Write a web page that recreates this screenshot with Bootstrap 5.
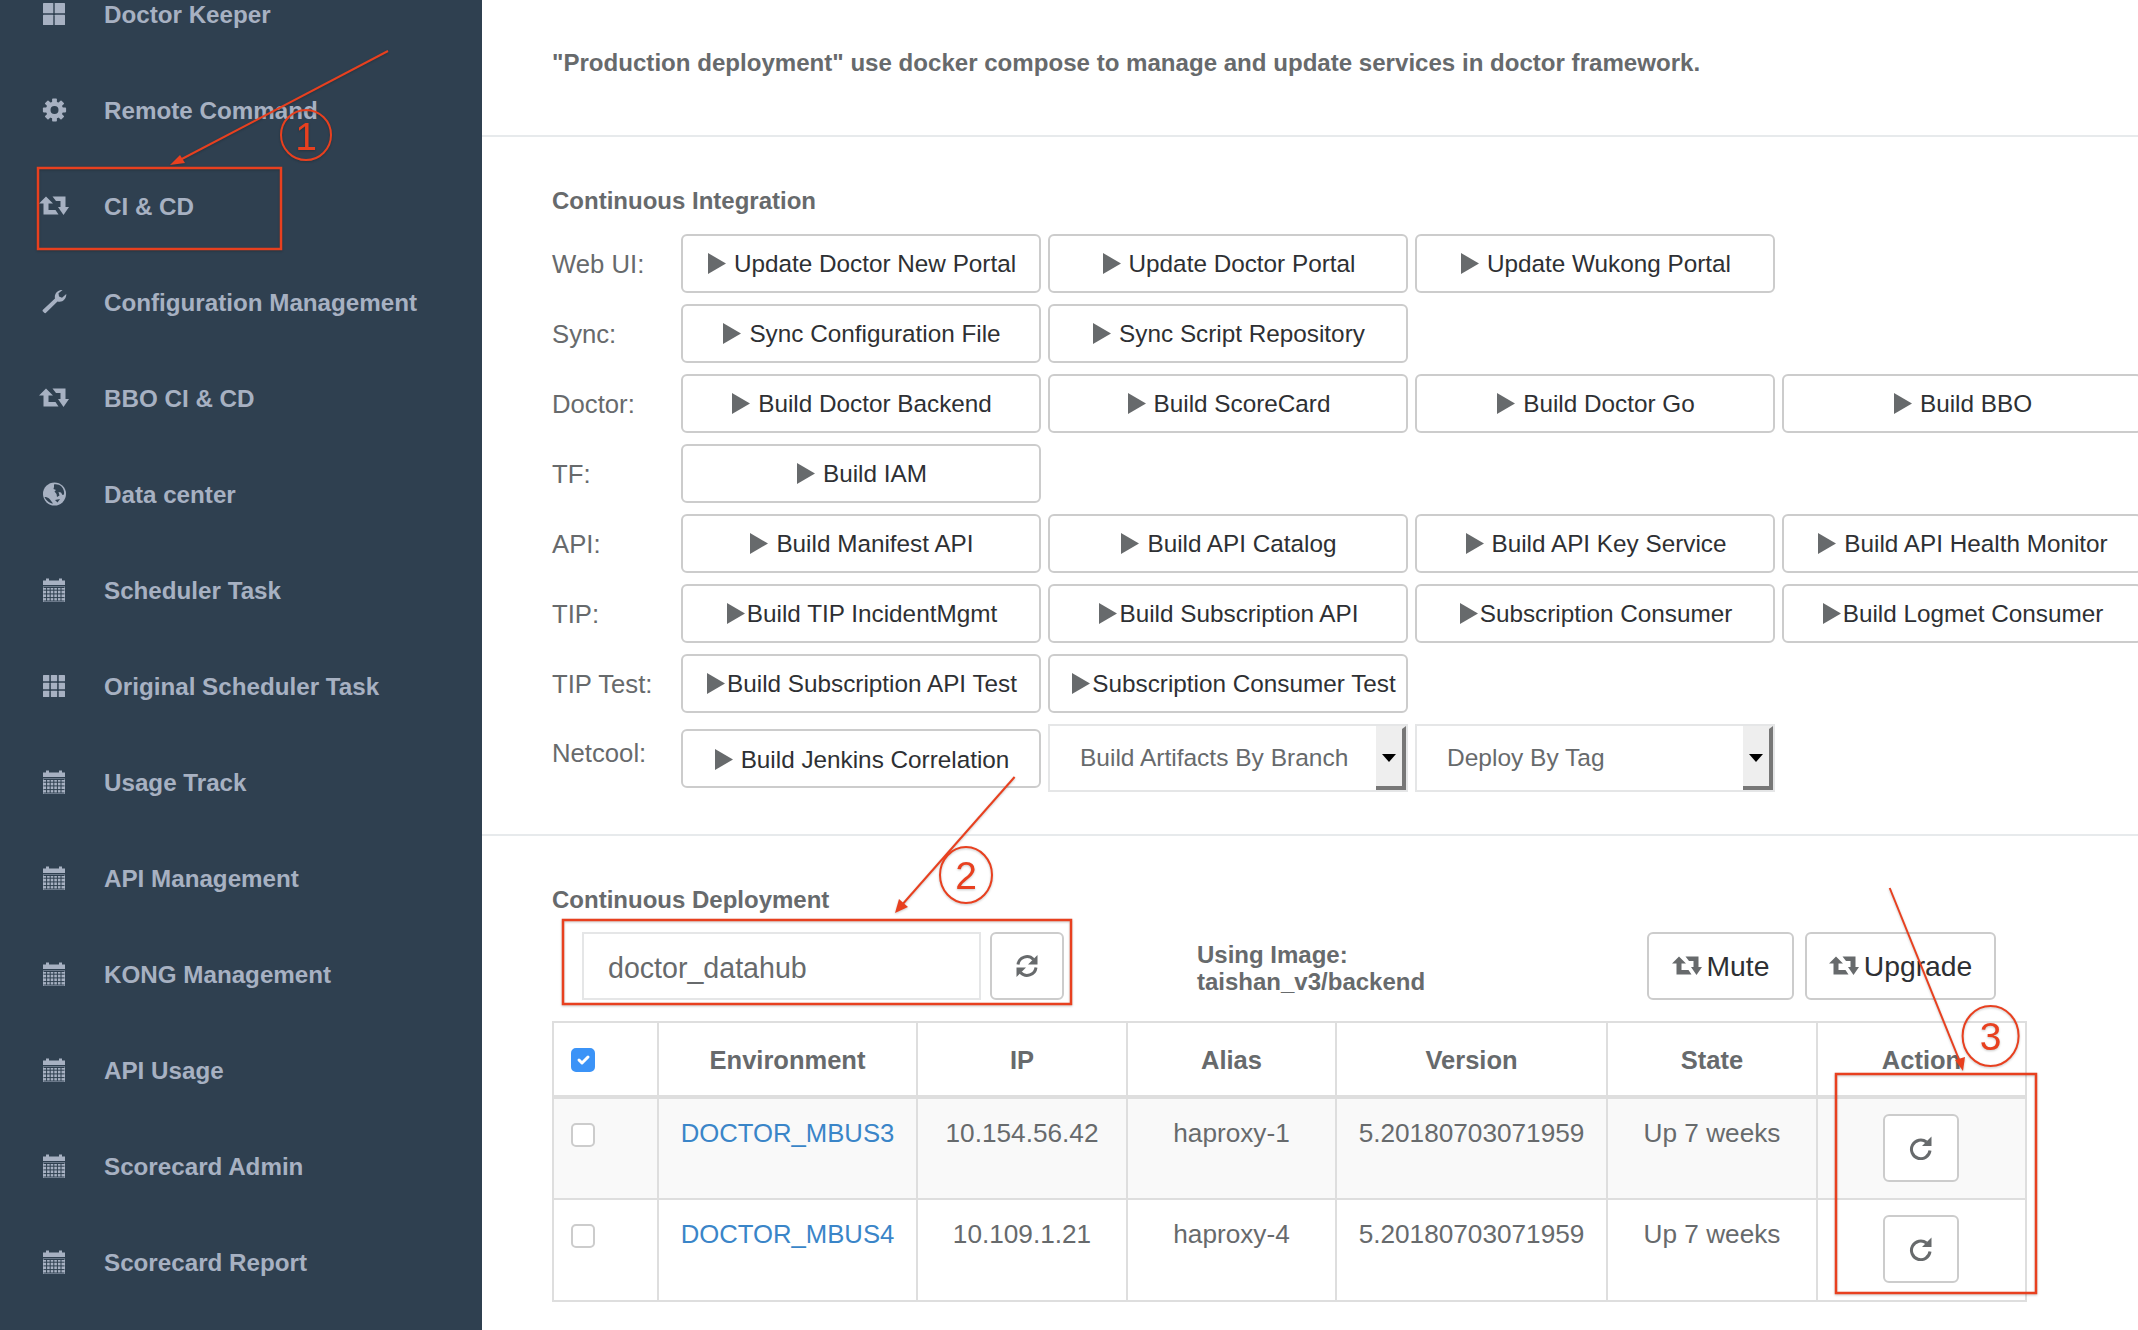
<!DOCTYPE html>
<html lang="en">
<head>
<meta charset="utf-8">
<title>CI &amp; CD</title>
<link rel="stylesheet" href="https://cdn.jsdelivr.net/npm/bootstrap@5.3.0/dist/css/bootstrap.min.css">
<style>
html,body{height:1330px;overflow:hidden}
body{font-family:"Liberation Sans",Arial,sans-serif;color:#676a6c;background:#fff;position:relative}
.side{width:482px;height:1330px;background:#2f4050;overflow:hidden;flex:none}
.side-list{margin-top:-34px}
.side-item{height:96px;padding:2px 0 0 39px;gap:35px;color:#a7b1c2;font-size:24.2px;font-weight:700;text-decoration:none}
.side-item:hover{color:#a7b1c2}
.side-ico{width:30px;height:24px;flex:none;fill:currentColor;margin-top:-2px}
.main{flex:1 1 0;min-width:0;overflow:hidden}
.intro{height:137px;padding:47px 0 0 70px;border-bottom:2px solid #e7eaec;font-size:24.08px;line-height:32px;font-weight:700}
.sec-title{font-size:24px;line-height:32px;font-weight:700;margin:0}
.ci{padding:48px 0 42px 70px;border-bottom:2px solid #e7eaec}
.ci .sec-title{margin-bottom:17px}
.ci-row{margin-bottom:11px}
.ci-row:last-child{margin-bottom:0}
.ci-label{width:129px;flex:none;font-size:25.7px;line-height:32px}
.ci-btns{gap:7px}
.act{width:360px;height:59px;flex:none;padding:2px 0 0 2px;background:#fff;border:2px solid #ccc;border-radius:6px;color:#2e3033;font-size:24.3px;line-height:1;gap:8px}
.act.tight{gap:2px}
.act.nudge{padding-left:12px}
.act:hover{background:#fff;border-color:#ccc;color:#2e3033}
.tri{width:18px;height:21px;flex:none;fill:#676a6c;margin-top:-2px}
.lbl-top{align-self:flex-start;line-height:58px}
.act-low{margin-top:5px;padding-top:4px}
.pick{width:360px;height:68px;flex:none;border:2px solid #e5e6e7;font-size:24.5px}
.pick-txt{padding-left:30px}
.pick-caret{width:30px;border-style:solid;border-width:3px 4px 4px 0;border-color:#eee #777 #777 #eee;background:#eee}
.pick-caret i{width:0;height:0;border-left:7px solid transparent;border-right:7px solid transparent;border-top:8px solid #000}
.cd{padding:48px 0 0 70px}
.cd .sec-title{margin-bottom:16px}
.tools{height:68px;margin-bottom:21px;gap:9px}
.name-input.form-control{width:399px;height:68px;margin-left:30px;border:2px solid #e5e6e7;border-radius:0;padding:5px 24px 0;font-size:28.6px;color:#676a6c;background:#fff}
.tbtn{height:68px;background:#fff;border:2px solid #ccc;border-radius:6px;color:#2e3033;font-size:28.3px;padding:0;line-height:1}
.tbtn:hover{background:#fff;border-color:#ccc;color:#2e3033}
.tbtn-ico{width:74px}
.tbtn-mute{width:147px}
.tbtn-up{width:191px}
.ico-ref{width:24px;height:24px;fill:none;stroke:#676a6c;stroke-width:3}
.ico-ref .head{fill:#676a6c;stroke:none}
.ico-ret{width:30px;height:24px;flex:none;fill:#676a6c;margin-right:5px}
.using{margin-left:124px;width:441px;font-size:24px;line-height:27px;font-weight:700;padding-top:4px}
.up-group{gap:11px}
.env-table.table{width:1473px;table-layout:fixed;margin:0;--bs-table-striped-bg:#f9f9f9;--bs-table-border-color:#dedede;--bs-table-color:#676a6c;--bs-table-striped-color:#676a6c;font-size:26.2px;text-align:center;color:#676a6c}
.env-table th,.env-table td{border-width:2px;padding:0}
.env-table thead th{height:75px;vertical-align:middle;border-bottom-width:4px;font-weight:700;font-size:25.5px;padding-top:2px}
.env-table tbody td{height:102px;vertical-align:top;padding-top:15px}
.env-table a{color:#3a85c8;text-decoration:none;font-size:25.7px}
.chk.form-check-input{width:24px;height:24px;margin:0;border:2px solid #ccc;border-radius:5px;background-color:#fff;display:block;margin-left:17px}
.chk.form-check-input:checked{background-color:#3b93f7;border-color:#3b93f7}
td .chk.form-check-input{margin-top:9px}
.env-table td.act-cell{padding-top:15px}
.rowbtn{width:76px;height:68px;background:#fff;border:2px solid #ccc;border-radius:6px;padding:0;margin-left:-2px}
.rowbtn:hover{background:#fff;border-color:#ccc}
.marks{position:absolute;left:0;top:0;width:2138px;height:1330px;pointer-events:none;z-index:5;filter:drop-shadow(0 1px 1px rgba(0,0,0,.22))}
.marks text{font-family:"Liberation Sans",Arial,sans-serif;font-size:39px;fill:#e8401f;text-anchor:middle}
.marks .ln{stroke:#e8401f;stroke-width:2;fill:none}
.marks .bx{stroke:#e8401f;stroke-width:2.5;fill:none}
.marks .hd{fill:#e8401f}
</style>
</head>
<body>
<svg width="0" height="0" class="d-block" style="position:absolute" aria-hidden="true">
  <symbol id="i-thl" viewBox="0 0 30 24"><rect x="4" y="1" width="10.3" height="10.3" rx=".6"/><rect x="15.7" y="1" width="10.3" height="10.3" rx=".6"/><rect x="4" y="12.7" width="10.3" height="10.3" rx=".6"/><rect x="15.7" y="12.7" width="10.3" height="10.3" rx=".6"/></symbol>
  <symbol id="i-cog" viewBox="0 0 30 24"><g transform="translate(15.5 12)"><path fill-rule="evenodd" d="M-8.6 0A8.6 8.6 0 1 0 8.6 0A8.6 8.6 0 1 0-8.6 0ZM-4 0A4 4 0 1 1 4 0A4 4 0 1 1-4 0Z"/><g><rect x="-2.4" y="-11.6" width="4.8" height="5" rx=".8"/><rect x="-2.4" y="6.6" width="4.8" height="5" rx=".8"/><rect x="-11.6" y="-2.4" width="5" height="4.8" rx=".8"/><rect x="6.6" y="-2.4" width="5" height="4.8" rx=".8"/></g><g transform="rotate(45)"><rect x="-2.4" y="-11.6" width="4.8" height="5" rx=".8"/><rect x="-2.4" y="6.6" width="4.8" height="5" rx=".8"/><rect x="-11.6" y="-2.4" width="5" height="4.8" rx=".8"/><rect x="6.6" y="-2.4" width="5" height="4.8" rx=".8"/></g></g></symbol>
  <symbol id="i-ret" viewBox="0 0 30 24"><path d="M7 2.500 14 9.500H9.500V16H16.500L19.500 20.500H4.500V9.500H0Z"/><path d="M13.500 2.500H26.500V13H30L24.500 21 19 13H21.500V7H17Z"/></symbol>
  <symbol id="i-wr" viewBox="0 0 30 24"><path d="M5.500 23 3.500 21 3.700 20 16 8.500C15 4 18.500-.2 24-.3L19.500 3.200 20 6.600 23 7.800 27.300 4C27.500 9.500 23 13 18.500 11.400L6.500 23.200Z"/></symbol>
  <symbol id="i-gl" viewBox="0 0 30 24"><circle cx="15.500" cy="12" r="11.500"/><path fill="#2f4050" d="M15 2.500C17 1.800 20.500 2.500 22.500 4.500 24.500 6.500 25.500 9.500 25 12.500L23.500 13 22 10.500 19.500 10 20.500 13.500 18 15 17.500 12 15.500 9.500 17 8 14.500 7 15 5Z"/><path fill="#2f4050" d="M5.500 15C7 15 9.500 15.500 11 17.500L14 21.500C11 21.500 7.500 19 5.500 15Z"/><path fill="#2f4050" d="M16 18 21 17 18.500 20.500Z"/></symbol>
  <symbol id="i-cal" viewBox="0 0 30 24"><path d="M4 2.500H7V.5H10V2.500H20V.5H23V2.500H26V7H4Z"/><path d="M4 8.500H26V24H4Z"/><path fill="none" stroke="#2f4050" stroke-width="1" d="M4.500 12.200H25.500M4.500 15.900H25.500M4.500 19.600H25.500M7.600 9.500V23M11.200 9.500V23M14.800 9.500V23M18.400 9.500V23M22 9.500V23M4.500 9.500H25.500M4.500 23H25.500"/></symbol>
  <symbol id="i-th" viewBox="0 0 30 24"><rect x="4" y="1" width="6.300" height="6.300" rx=".5"/><rect x="11.850" y="1" width="6.300" height="6.300" rx=".5"/><rect x="19.700" y="1" width="6.300" height="6.300" rx=".5"/><rect x="4" y="8.850" width="6.300" height="6.300" rx=".5"/><rect x="11.850" y="8.850" width="6.300" height="6.300" rx=".5"/><rect x="19.700" y="8.850" width="6.300" height="6.300" rx=".5"/><rect x="4" y="16.700" width="6.300" height="6.300" rx=".5"/><rect x="11.850" y="16.700" width="6.300" height="6.300" rx=".5"/><rect x="19.700" y="16.700" width="6.300" height="6.300" rx=".5"/></symbol>
  <symbol id="i-tri" viewBox="0 0 18 21"><path d="M0 0 18 10.500 0 21Z"/></symbol>
</svg>

<div class="d-flex">
  <aside class="side">
    <nav class="side-list nav flex-column flex-nowrap">
      <a class="side-item d-flex align-items-center" href="#"><svg class="side-ico"><use href="#i-thl"/></svg>Doctor Keeper</a>
      <a class="side-item d-flex align-items-center" href="#"><svg class="side-ico"><use href="#i-cog"/></svg>Remote Command</a>
      <a class="side-item d-flex align-items-center" href="#"><svg class="side-ico"><use href="#i-ret"/></svg>CI &amp; CD</a>
      <a class="side-item d-flex align-items-center" href="#"><svg class="side-ico"><use href="#i-wr"/></svg>Configuration Management</a>
      <a class="side-item d-flex align-items-center" href="#"><svg class="side-ico"><use href="#i-ret"/></svg>BBO CI &amp; CD</a>
      <a class="side-item d-flex align-items-center" href="#"><svg class="side-ico"><use href="#i-gl"/></svg>Data center</a>
      <a class="side-item d-flex align-items-center" href="#"><svg class="side-ico"><use href="#i-cal"/></svg>Scheduler Task</a>
      <a class="side-item d-flex align-items-center" href="#"><svg class="side-ico"><use href="#i-th"/></svg>Original Scheduler Task</a>
      <a class="side-item d-flex align-items-center" href="#"><svg class="side-ico"><use href="#i-cal"/></svg>Usage Track</a>
      <a class="side-item d-flex align-items-center" href="#"><svg class="side-ico"><use href="#i-cal"/></svg>API Management</a>
      <a class="side-item d-flex align-items-center" href="#"><svg class="side-ico"><use href="#i-cal"/></svg>KONG Management</a>
      <a class="side-item d-flex align-items-center" href="#"><svg class="side-ico"><use href="#i-cal"/></svg>API Usage</a>
      <a class="side-item d-flex align-items-center" href="#"><svg class="side-ico"><use href="#i-cal"/></svg>Scorecard Admin</a>
      <a class="side-item d-flex align-items-center" href="#"><svg class="side-ico"><use href="#i-cal"/></svg>Scorecard Report</a>
    </nav>
  </aside>

  <main class="main">
    <div class="intro">"Production deployment" use docker compose to manage and update services in doctor framework.</div>

    <section class="ci">
      <h5 class="sec-title">Continuous Integration</h5>

      <div class="ci-row d-flex align-items-center">
        <div class="ci-label">Web UI:</div>
        <div class="ci-btns d-flex">
          <button class="btn act d-flex align-items-center justify-content-center"><svg class="tri"><use href="#i-tri"/></svg>Update Doctor New Portal</button>
          <button class="btn act d-flex align-items-center justify-content-center"><svg class="tri"><use href="#i-tri"/></svg>Update Doctor Portal</button>
          <button class="btn act d-flex align-items-center justify-content-center"><svg class="tri"><use href="#i-tri"/></svg>Update Wukong Portal</button>
        </div>
      </div>
      <div class="ci-row d-flex align-items-center">
        <div class="ci-label">Sync:</div>
        <div class="ci-btns d-flex">
          <button class="btn act d-flex align-items-center justify-content-center"><svg class="tri"><use href="#i-tri"/></svg>Sync Configuration File</button>
          <button class="btn act d-flex align-items-center justify-content-center"><svg class="tri"><use href="#i-tri"/></svg>Sync Script Repository</button>
        </div>
      </div>
      <div class="ci-row d-flex align-items-center">
        <div class="ci-label">Doctor:</div>
        <div class="ci-btns d-flex">
          <button class="btn act d-flex align-items-center justify-content-center"><svg class="tri"><use href="#i-tri"/></svg>Build Doctor Backend</button>
          <button class="btn act d-flex align-items-center justify-content-center"><svg class="tri"><use href="#i-tri"/></svg>Build ScoreCard</button>
          <button class="btn act d-flex align-items-center justify-content-center"><svg class="tri"><use href="#i-tri"/></svg>Build Doctor Go</button>
          <button class="btn act d-flex align-items-center justify-content-center"><svg class="tri"><use href="#i-tri"/></svg>Build BBO</button>
        </div>
      </div>
      <div class="ci-row d-flex align-items-center">
        <div class="ci-label">TF:</div>
        <div class="ci-btns d-flex">
          <button class="btn act d-flex align-items-center justify-content-center"><svg class="tri"><use href="#i-tri"/></svg>Build IAM</button>
        </div>
      </div>
      <div class="ci-row d-flex align-items-center">
        <div class="ci-label">API:</div>
        <div class="ci-btns d-flex">
          <button class="btn act d-flex align-items-center justify-content-center"><svg class="tri"><use href="#i-tri"/></svg>Build Manifest API</button>
          <button class="btn act d-flex align-items-center justify-content-center"><svg class="tri"><use href="#i-tri"/></svg>Build API Catalog</button>
          <button class="btn act d-flex align-items-center justify-content-center"><svg class="tri"><use href="#i-tri"/></svg>Build API Key Service</button>
          <button class="btn act d-flex align-items-center justify-content-center"><svg class="tri"><use href="#i-tri"/></svg>Build API Health Monitor</button>
        </div>
      </div>
      <div class="ci-row d-flex align-items-center">
        <div class="ci-label">TIP:</div>
        <div class="ci-btns d-flex">
          <button class="btn act tight d-flex align-items-center justify-content-center"><svg class="tri"><use href="#i-tri"/></svg>Build TIP IncidentMgmt</button>
          <button class="btn act tight d-flex align-items-center justify-content-center"><svg class="tri"><use href="#i-tri"/></svg>Build Subscription API</button>
          <button class="btn act tight d-flex align-items-center justify-content-center"><svg class="tri"><use href="#i-tri"/></svg>Subscription Consumer</button>
          <button class="btn act tight d-flex align-items-center justify-content-center"><svg class="tri"><use href="#i-tri"/></svg>Build Logmet Consumer</button>
        </div>
      </div>
      <div class="ci-row d-flex align-items-center">
        <div class="ci-label">TIP Test:</div>
        <div class="ci-btns d-flex">
          <button class="btn act tight d-flex align-items-center justify-content-center"><svg class="tri"><use href="#i-tri"/></svg>Build Subscription API Test</button>
          <button class="btn act tight nudge d-flex align-items-center justify-content-center"><svg class="tri"><use href="#i-tri"/></svg>Subscription Consumer Test</button>
        </div>
      </div>
      <div class="ci-row d-flex">
        <div class="ci-label lbl-top">Netcool:</div>
        <div class="ci-btns d-flex align-items-start">
          <button class="btn act act-low d-flex align-items-center justify-content-center"><svg class="tri"><use href="#i-tri"/></svg>Build Jenkins Correlation</button>
          <div class="pick d-flex"><span class="pick-txt flex-grow-1 d-flex align-items-center">Build Artifacts By Branch</span><span class="pick-caret d-flex align-items-center justify-content-center"><i></i></span></div>
          <div class="pick d-flex"><span class="pick-txt flex-grow-1 d-flex align-items-center">Deploy By Tag</span><span class="pick-caret d-flex align-items-center justify-content-center"><i></i></span></div>
        </div>
      </div>
    </section>

    <section class="cd">
      <h5 class="sec-title">Continuous Deployment</h5>
      <div class="tools d-flex align-items-center">
        <input class="form-control name-input flex-shrink-0" type="text" value="doctor_datahub" aria-label="Service">
        <button class="btn tbtn tbtn-ico flex-shrink-0 d-flex align-items-center justify-content-center" aria-label="Refresh">
          <svg class="ico-ref" viewBox="0 0 24 24"><path d="M3 10.500A9 9 0 0 1 18.500 5.500"/><path class="head" d="M22.500 1V10.500H13Z"/><path d="M21 13.500A9 9 0 0 1 5.500 18.500"/><path class="head" d="M1.500 23V13.500H11Z"/></svg>
        </button>
        <div class="using flex-shrink-0">Using Image:<br>taishan_v3/backend</div>
        <div class="up-group d-flex flex-shrink-0">
          <button class="btn tbtn tbtn-mute d-flex align-items-center justify-content-center"><svg class="ico-ret"><use href="#i-ret"/></svg>Mute</button>
          <button class="btn tbtn tbtn-up d-flex align-items-center justify-content-center"><svg class="ico-ret"><use href="#i-ret"/></svg>Upgrade</button>
        </div>
      </div>

      <table class="table table-bordered table-striped env-table">
        <colgroup><col style="width:105px"><col style="width:259px"><col style="width:210px"><col style="width:209px"><col style="width:271px"><col style="width:210px"><col style="width:209px"></colgroup>
        <thead>
          <tr><th><input class="form-check-input chk" type="checkbox" checked aria-label="All"></th><th>Environment</th><th>IP</th><th>Alias</th><th>Version</th><th>State</th><th>Action</th></tr>
        </thead>
        <tbody>
          <tr>
            <td><input class="form-check-input chk" type="checkbox" aria-label="Select"></td>
            <td><a href="#">DOCTOR_MBUS3</a></td><td>10.154.56.42</td><td>haproxy-1</td><td>5.20180703071959</td><td>Up 7 weeks</td>
            <td class="act-cell"><button class="btn rowbtn" aria-label="Restart"><svg class="ico-ref" viewBox="0 0 24 24"><path d="M21 14.500A9.300 9.300 0 1 1 17.500 6"/><path class="head" d="M22.500 .5V10H13Z"/></svg></button></td>
          </tr>
          <tr>
            <td><input class="form-check-input chk" type="checkbox" aria-label="Select"></td>
            <td><a href="#">DOCTOR_MBUS4</a></td><td>10.109.1.21</td><td>haproxy-4</td><td>5.20180703071959</td><td>Up 7 weeks</td>
            <td class="act-cell"><button class="btn rowbtn" aria-label="Restart"><svg class="ico-ref" viewBox="0 0 24 24"><path d="M21 14.500A9.300 9.300 0 1 1 17.500 6"/><path class="head" d="M22.500 .5V10H13Z"/></svg></button></td>
          </tr>
        </tbody>
      </table>
    </section>
  </main>
</div>

<svg class="marks" viewBox="0 0 2138 1330">
  <path class="ln" d="M388 51 178 161"/><path class="hd" d="M170 165 180 155 185 163Z"/>
  <circle class="ln" cx="306" cy="135" r="25"/><text x="306" y="150">1</text>
  <rect class="bx" x="38" y="168" width="243" height="81"/>
  <path class="ln" d="M1014.600 777 901 906"/><path class="hd" d="M895 913 899 899 908 907Z"/>
  <ellipse class="ln" cx="966" cy="875" rx="26" ry="28"/><text x="966" y="889">2</text>
  <rect class="bx" x="563" y="920" width="508" height="84"/>
  <path class="ln" d="M1889.700 888 1960 1062"/><path class="hd" d="M1963 1071 1955 1060 1965 1057Z"/>
  <ellipse class="ln" cx="1990.600" cy="1036" rx="28" ry="30"/><text x="1990.600" y="1050">3</text>
  <rect class="bx" x="1836" y="1074" width="200" height="219"/>
</svg>
<script src="https://cdn.jsdelivr.net/npm/bootstrap@5.3.0/dist/js/bootstrap.bundle.min.js"></script>
</body>
</html>
